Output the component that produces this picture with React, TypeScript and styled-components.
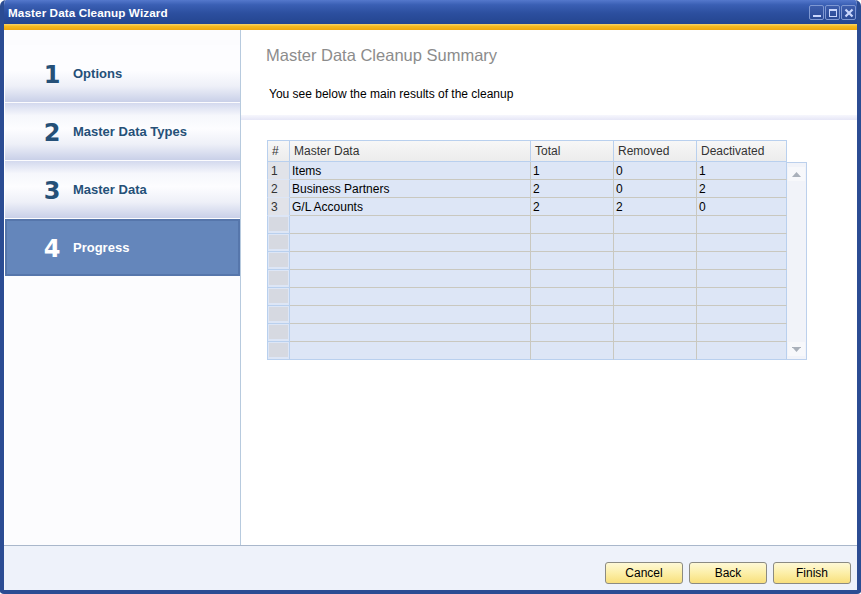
import React from 'react';
import styled, { createGlobalStyle } from 'styled-components';

const GlobalStyle = createGlobalStyle`
  html, body {
    margin: 0;
    padding: 0;
    background: #fff;
  }
  body {
    font-family: "Liberation Sans", Arial, sans-serif;
    font-size: 12px;
  }
`;

const steps = [
  { num: '1', label: 'Options' },
  { num: '2', label: 'Master Data Types' },
  { num: '3', label: 'Master Data' },
  { num: '4', label: 'Progress' },
];

const rows = [
  ['1', 'Items', '1', '0', '1'],
  ['2', 'Business Partners', '2', '0', '2'],
  ['3', 'G/L Accounts', '2', '2', '0'],
];

const emptyRows = 8;

const App = () => {
  const allRows = [
    ...rows,
    ...Array.from({ length: emptyRows }, () => ['', '', '', '', '']),
  ];

  return (
    <>
      <GlobalStyle />
      <Window>
        <TitleBar>
          <Title>Master Data Cleanup Wizard</Title>
          <TitleButtons>
            <TitleButton>
              <svg width="10" height="10" viewBox="0 0 10 10">
                <rect x="1" y="7" width="8" height="2" fill="#c9d6fb" />
              </svg>
            </TitleButton>
            <TitleButton>
              <svg width="10" height="10" viewBox="0 0 10 10">
                <rect x="1.5" y="1.5" width="7" height="7" fill="none" stroke="#c9d6fb" />
                <rect x="1" y="1" width="8" height="2" fill="#c9d6fb" />
              </svg>
            </TitleButton>
            <TitleButton>
              <svg width="10" height="10" viewBox="0 0 10 10">
                <path d="M1.5 1.5 L8.5 8.5 M8.5 1.5 L1.5 8.5" stroke="#c9d6fb" strokeWidth="2.2" />
              </svg>
            </TitleButton>
          </TitleButtons>
        </TitleBar>
        <AccentBar />
        <Body>
          <Nav>
            {steps.map((s, i) => (
              <NavItem key={s.num} $active={i === 3}>
                <StepNum>{s.num}</StepNum>
                <StepLabel>{s.label}</StepLabel>
              </NavItem>
            ))}
          </Nav>
          <Main>
            <Heading>Master Data Cleanup Summary</Heading>
            <Subtitle>You see below the main results of the cleanup</Subtitle>
            <Divider />
            <TableArea>
              <Grid>
                <HeadCell $first>#</HeadCell>
                <HeadCell>Master Data</HeadCell>
                <HeadCell>Total</HeadCell>
                <HeadCell>Removed</HeadCell>
                <HeadCell>Deactivated</HeadCell>
                <Corner />
                {allRows.map((r, ri) => (
                  <React.Fragment key={ri}>
                    <RowNum $empty={r[0] === ''} $last={ri === allRows.length - 1}>
                      {r[0] === '' ? <RowNumBox /> : r[0]}
                    </RowNum>
                    {r.slice(1).map((c, ci) => (
                      <Cell key={ci} $last={ri === allRows.length - 1} $lastCol={ci === 3}>
                        {c}
                      </Cell>
                    ))}
                    {ri === 0 && (
                      <ScrollBar style={{ gridRow: `2 / span ${allRows.length}` }}>
                        <ScrollArrow>
                          <svg width="9" height="5" viewBox="0 0 9 5">
                            <path d="M0 5 L4.5 0 L9 5 Z" fill="#a9b0ba" />
                          </svg>
                        </ScrollArrow>
                        <ScrollArrow>
                          <svg width="9" height="5" viewBox="0 0 9 5">
                            <rect x="0" y="0" width="9" height="1" fill="#a9b0ba" />
                            <path d="M1 1 L4.5 5 L8 1 Z" fill="#a9b0ba" />
                          </svg>
                        </ScrollArrow>
                      </ScrollBar>
                    )}
                  </React.Fragment>
                ))}
              </Grid>
            </TableArea>
          </Main>
        </Body>
        <Footer>
          <FooterButton>Cancel</FooterButton>
          <FooterButton>Back</FooterButton>
          <FooterButton>Finish</FooterButton>
        </Footer>
      </Window>
    </>
  );
};

export default App;

const Window = styled.div`
  width: 861px;
  height: 594px;
  box-sizing: border-box;
  display: flex;
  flex-direction: column;
  background: #fff;
  border: 4px solid #2b4c93;
  border-top: none;
  border-radius: 6px 6px 4px 4px;
  overflow: hidden;
`;

const TitleBar = styled.div`
  height: 24px;
  flex-shrink: 0;
  margin: 0 -4px;
  padding: 0 5px 0 8px;
  display: flex;
  align-items: center;
  justify-content: space-between;
  background: linear-gradient(to bottom, #5478cc 0%, #3a5fb4 20%, #2c4f9f 55%, #24458f 100%);
  border-radius: 6px 6px 0 0;
`;

const Title = styled.div`
  color: #fff;
  font-weight: bold;
  font-size: 11.7px;
  letter-spacing: 0.1px;
`;

const TitleButtons = styled.div`
  display: flex;
  gap: 1px;
  margin-top: 1px;
`;

const TitleButton = styled.div`
  width: 13px;
  height: 13px;
  border: 1px solid #7f98d2;
  border-radius: 2px;
  background: linear-gradient(to bottom, #3d5dac, #2a4a95);
  display: flex;
  align-items: center;
  justify-content: center;
`;

const AccentBar = styled.div`
  height: 6px;
  flex-shrink: 0;
  background: linear-gradient(to bottom, #f9d46a 0%, #f5b91e 40%, #eea712 100%);
`;

const Body = styled.div`
  flex: 1;
  display: flex;
  min-height: 0;
  border-bottom: 1px solid #a9b7cb;
`;

const Nav = styled.div`
  width: 235px;
  margin-left: 1px;
  padding-top: 15px;
  border-right: 1px solid #b7cade;
  background: #fcfcfe;
  display: flex;
  flex-direction: column;
  gap: 1px;
`;

const NavItem = styled.div<{ $active?: boolean }>`
  height: 57px;
  display: flex;
  align-items: center;
  padding-left: 38px;
  gap: 12px;
  box-sizing: border-box;
  background: ${({ $active }) =>
    $active
      ? '#6486bb'
      : 'linear-gradient(to bottom, #d3d9ee 0%, #f6f7fc 22%, #fdfdff 45%, #eef0f8 72%, #c9d0e8 100%)'};
  box-shadow: ${({ $active }) => ($active ? 'inset 0 0 0 2px #5676ab' : 'none')};
  color: ${({ $active }) => ($active ? '#fff' : '#255078')};
  &:first-child {
    background: ${({ $active }) =>
      $active ? '#6486bb' : 'linear-gradient(to bottom, #fdfdff 0%, #fdfdff 45%, #eef0f8 72%, #c9d0e8 100%)'};
  }
`;

const StepNum = styled.span`
  width: 18px;
  text-align: center;
  font-family: "DejaVu Sans", "Liberation Sans", sans-serif;
  font-weight: bold;
  font-size: 24px;
  line-height: 1;
  padding-top: 3px;
`;

const StepLabel = styled.span`
  font-weight: bold;
  font-size: 13px;
`;

const Main = styled.div`
  flex: 1;
  display: flex;
  flex-direction: column;
  background: #fff;
`;

const Heading = styled.div`
  padding: 16px 0 0 25px;
  font-size: 16.5px;
  color: #8c8c8c;
  height: 20px;
`;

const Subtitle = styled.div`
  padding: 21px 0 0 28px;
  font-size: 12px;
  color: #000;
  height: 16px;
`;

const Divider = styled.div`
  margin-top: 12px;
  height: 5px;
  background: linear-gradient(to bottom, #f7f7fd, #e6e7f7);
`;

const TableArea = styled.div`
  padding: 20px 0 0 26px;
`;

const Grid = styled.div`
  display: grid;
  grid-template-columns: 23px 241px 83px 83px 90px 20px;
  grid-auto-rows: 18px;
  grid-template-rows: 22px;
  font-size: 12px;
  color: #000;
`;

const HeadCell = styled.div<{ $first?: boolean }>`
  box-sizing: border-box;
  background: linear-gradient(to bottom, #f7f7f7, #ececec);
  border-top: 1px solid #b9d0ee;
  border-right: 1px solid #b9d0ee;
  border-bottom: 1px solid #b9d0ee;
  border-left: ${({ $first }) => ($first ? '1px solid #b9d0ee' : 'none')};
  padding: 3px 0 0 4px;
  color: #333;
  text-align: left;
`;

const Corner = styled.div``;

const RowNum = styled.div<{ $empty?: boolean; $last?: boolean }>`
  box-sizing: border-box;
  background: ${({ $empty }) => ($empty ? '#dde6f6' : '#e1e3e9')};
  border-left: 1px solid #b9d0ee;
  border-right: 1px solid #b9d0ee;
  border-bottom: 1px solid ${({ $last, $empty }) => ($last ? '#b9d0ee' : $empty ? '#b9d0ee' : '#dde6f6')};
  padding: 2px 0 0 3px;
  color: #333;
  display: flex;
  align-items: flex-start;
`;

const RowNumBox = styled.div`
  width: 19px;
  height: 14px;
  margin: -1px 0 0 -2px;
  background: #d6d9e1;
`;

const Cell = styled.div<{ $last?: boolean; $lastCol?: boolean }>`
  box-sizing: border-box;
  background: #dde6f6;
  border-right: 1px solid ${({ $lastCol }) => ($lastCol ? '#b9d0ee' : '#c9c8bf')};
  border-bottom: 1px solid ${({ $last }) => ($last ? '#b9d0ee' : '#c9c8bf')};
  padding: 2px 0 0 2px;
  white-space: nowrap;
  overflow: hidden;
`;

const ScrollBar = styled.div`
  grid-column: 6;
  box-sizing: border-box;
  border: 1px solid #bcd0ec;
  border-left: none;
  background: #f1f3f9;
  display: flex;
  flex-direction: column;
  justify-content: space-between;
  align-items: center;
  padding: 4px 0 3px;
`;

const ScrollArrow = styled.div`
  width: 17px;
  height: 14px;
  display: flex;
  align-items: center;
  justify-content: center;
  background: #f7f8fb;
`;

const Footer = styled.div`
  height: 44px;
  flex-shrink: 0;
  background: #eef2fa;
  display: flex;
  justify-content: flex-end;
  align-items: flex-start;
  padding: 16px 6px 0 0;
  gap: 6px;
  box-sizing: border-box;
`;

const FooterButton = styled.button`
  width: 78px;
  height: 22px;
  box-sizing: border-box;
  border: 1px solid #8b8b82;
  border-radius: 3px;
  background: linear-gradient(to bottom, #fef9d6 0%, #fcefa8 50%, #f8df7c 100%);
  font-family: "Liberation Sans", Arial, sans-serif;
  font-size: 12px;
  color: #000;
  padding: 0;
  cursor: pointer;
`;
